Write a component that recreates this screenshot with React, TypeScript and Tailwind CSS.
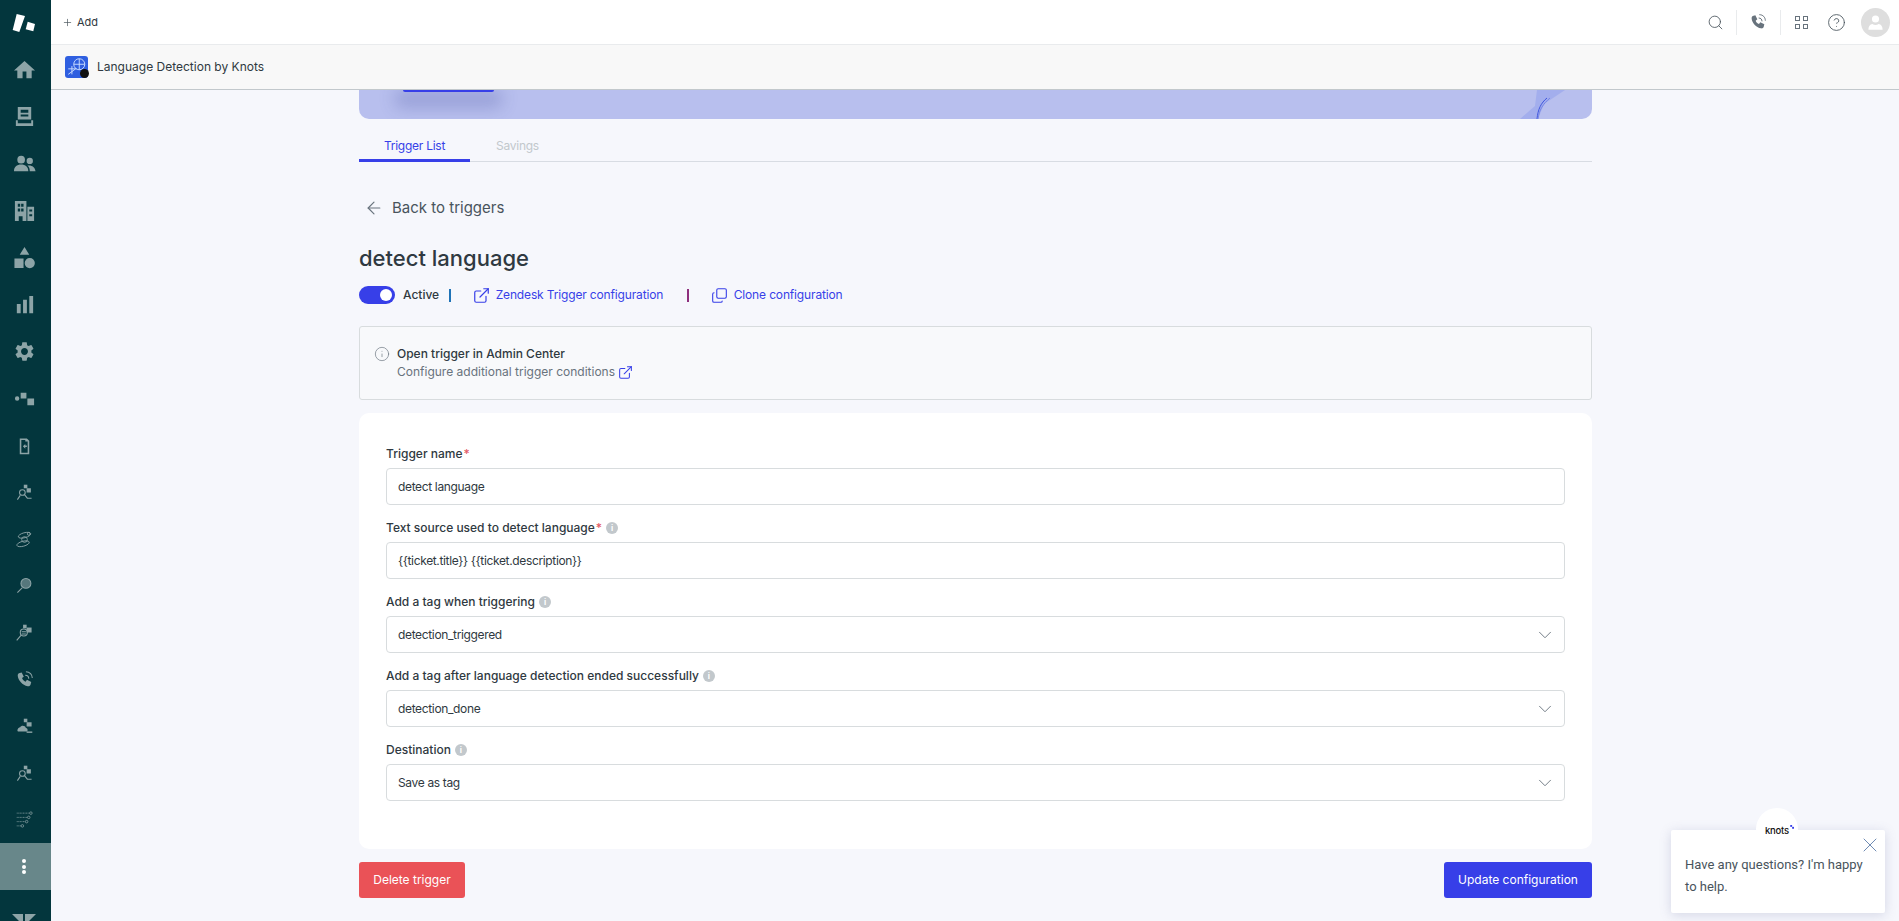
import React from 'react';
import { Search, Plus, ArrowLeft, ExternalLink, ChevronDown, X, Copy, CircleHelp, Info } from 'lucide-react';

const gear = 'M19.14 12.94c.04-.3.06-.61.06-.94 0-.32-.02-.64-.07-.94l2.03-1.58c.18-.14.23-.41.12-.61l-1.92-3.32c-.12-.22-.37-.29-.59-.22l-2.39.96c-.5-.38-1.03-.7-1.62-.94l-.36-2.54c-.04-.24-.24-.41-.48-.41h-3.84c-.24 0-.43.17-.47.41l-.36 2.54c-.59.24-1.13.57-1.62.94l-2.39-.96c-.22-.08-.47 0-.59.22L2.74 8.87c-.12.21-.08.47.12.61l2.03 1.58c-.05.3-.09.63-.09.94s.02.64.07.94l-2.03 1.58c-.18.14-.23.41-.12.61l1.92 3.32c.12.22.37.29.59.22l2.39-.96c.5.38 1.03.7 1.62.94l.36 2.54c.05.24.24.41.48.41h3.84c.24 0 .44-.17.47-.41l.36-2.54c.59-.24 1.13-.56 1.62-.94l2.39.96c.22.08.47 0 .59-.22l1.92-3.32c.12-.22.07-.47-.12-.61l-2.01-1.58zM12 15.6c-1.98 0-3.6-1.62-3.6-3.6s1.62-3.6 3.6-3.6 3.6 1.62 3.6 3.6-1.62 3.6-3.6 3.6z';

const railIcons: React.ReactNode[] = [
  <path key="h" d="M10 21v-7h4v7h5.500v-8H23L12 3 1 13h3.500v8z" />,
  <path key="t" fillRule="evenodd" d="M5 2h14v13H5zM8 5v3h8V5zM8 10v2h8v-2zM3 16h2v3h14v-3h2v6H3z" />,
  <path key="u" d="M8.500 4a4 4 0 1 1 0 8 4 4 0 0 1 0-8zM17.500 6a3.300 3.300 0 1 1 0 6.600 3.300 3.300 0 0 1 0-6.600zM1 20c0-4.500 3-7 7.500-7S16 15.500 16 20zM17.500 20c0-2.500-.8-4.500-2.500-5.800 4-1 8 1.300 8.500 5.800z" />,
  <path key="b" fillRule="evenodd" d="M2 2h12v21h-4v-5H6v5H2zM5 5v3h2.500V5zM8.500 5v3H11V5zM5 10v3h2.500v-3zM8.500 10v3H11v-3zM15 8h7v15h-7zM17 11v2h3v-2zM17 16v2h3v-2z" />,
  <path key="s" d="M12 1l5 8H7zM1.500 13h9.500v10H1.500zM17.500 12.500a5.300 5.300 0 1 1 0 10.600 5.300 5.300 0 0 1 0-10.600z" />,
  <path key="c" d="M4 11.500h4V21H4zM10.500 7h4v14h-4zM17 3h4v18h-4z" />,
  <path key="g" d={gear} />,
  <path key="r" d="M8 6h6v6H8zM2 12a2.300 2.300 0 1 1 4.600 0 2.300 2.300 0 0 1-4.600 0zM15 12h7v7h-7z" />,
  <path key="d" fillRule="evenodd" d="M6 3h9l3 3v17H6zM8 5v16h8V7h-3V5zM10 13l3-3v2h2v2h-2v2z" />,
];

const callPath = 'M4 3l4-1 3 6-2.500 2c1 2.500 2.500 4 5 5l2-2.500 6 3-1 4c-.5 1.500-2 2.500-4 2C9 20 3 13 2.500 7 2.300 5 3 3.800 4 3z';

// the little person + magnifier glyphs from marketplace apps
const AppGlyph = ({ kind }: { kind: string }) => {
  if (kind === 'person') {
    return (
      <svg viewBox="0 0 24 24" className="w-[17px] h-[17px]" fill="none" stroke="currentColor" strokeWidth="1.5">
        <rect x="15" y="6" width="6" height="6" fill="currentColor" stroke="none" />
        <rect x="11" y="1" width="5" height="5" fill="currentColor" stroke="none" />
        <circle cx="9" cy="12" r="4" />
        <path d="M2 22l4-6M12 15l4 5h6" />
      </svg>
    );
  }
  if (kind === 'globe') {
    return (
      <svg viewBox="0 0 24 24" className="w-[17px] h-[17px]" fill="none" stroke="currentColor" strokeWidth="1.2">
        <ellipse cx="12" cy="6" rx="9" ry="3.500" transform="rotate(-15 12 6)" />
        <circle cx="12" cy="12" r="4" />
        <ellipse cx="10" cy="18" rx="9" ry="3.500" transform="rotate(-15 10 18)" />
        <circle cx="18" cy="4" r="2" />
      </svg>
    );
  }
  if (kind === 'lens') {
    return (
      <svg viewBox="0 0 24 24" className="w-[17px] h-[17px]" fill="currentColor" stroke="currentColor" strokeWidth="1.5">
        <circle cx="14" cy="9" r="7" fillOpacity=".6" />
        <path d="M9 15l-7 7" fill="none" />
      </svg>
    );
  }
  if (kind === 'lens2') {
    return (
      <svg viewBox="0 0 24 24" className="w-[17px] h-[17px]" fill="none" stroke="currentColor" strokeWidth="1.5">
        <rect x="15" y="5" width="7" height="7" fill="currentColor" stroke="none" />
        <rect x="10" y="1" width="5" height="5" fill="currentColor" stroke="none" />
        <circle cx="11" cy="12" r="5" />
        <path d="M7 16l-6 7M8 11h6M8 14h6" />
      </svg>
    );
  }
  if (kind === 'call') {
    return (
      <svg viewBox="0 0 24 24" className="w-[17px] h-[17px]" fill="none" stroke="currentColor">
        <path fill="currentColor" stroke="none" d={callPath} />
        <path strokeWidth="1.5" d="M13 6c3 0 5 2 5 5M14 1c5.500 0 9 4 9 9" />
      </svg>
    );
  }
  if (kind === 'cloud') {
    return (
      <svg viewBox="0 0 24 24" className="w-[17px] h-[17px]" fill="currentColor">
        <rect x="15" y="6" width="7" height="6" />
        <rect x="11" y="1" width="5" height="5" />
        <path d="M2 18c0-3 2-5 4-5 1-3 7-3 8 1 2 0 3 2 2 5H3c-1 0-1-1-1-1z" />
        <rect x="15" y="19" width="8" height="2" />
      </svg>
    );
  }
  return (
    <svg viewBox="0 0 24 24" className="w-[17px] h-[17px]" fill="none" stroke="currentColor" strokeWidth="1" strokeDasharray="1.5 .7">
      <path d="M1 3h18M1 9h15M1 15h12M1 21h6" />
      <circle cx="21" cy="3" r="1.8" strokeDasharray="none" />
      <circle cx="18" cy="9" r="1.8" strokeDasharray="none" />
      <circle cx="15" cy="15" r="1.8" strokeDasharray="none" />
      <circle cx="9" cy="21" r="1.8" strokeDasharray="none" />
    </svg>
  );
};

const Rail = () => (
  <aside className="w-[51px] shrink-0 h-full bg-[#03363d] flex flex-col items-stretch overflow-hidden text-[#8da4a7]">
    <div className="h-[46px] shrink-0 flex items-center justify-center pr-[3px]">
      <svg viewBox="12 13 24 20" className="w-[24px] h-[20px] text-white" fill="currentColor">
        <path d="M16.700 14L25 16l-5.700 16-6.600-2z" />
        <path d="M27.700 21.700L35 24l-1.700 7.300-7.600-2z" />
      </svg>
    </div>
    {railIcons.map((icon, i) => (
      <div key={i} className="h-[47px] shrink-0 flex items-center justify-center pr-[3px]">
        <svg viewBox="0 0 24 24" className={i === 8 ? 'w-[19px] h-[19px]' : 'w-[23px] h-[23px]'} fill="currentColor">{icon}</svg>
      </div>
    ))}
    {['person', 'globe', 'lens', 'lens2', 'call', 'cloud', 'person', 'flow'].map((kind, i) => (
      <div key={i} className="h-[46.8px] shrink-0 flex items-center justify-center pr-[3px]">
        <AppGlyph kind={kind} />
      </div>
    ))}
    <div className="h-[47px] shrink-0 bg-[#68878a] flex flex-col items-center justify-center gap-[1.5px] pr-[3px]">
      <span className="w-[4px] h-[4px] rounded-full bg-white" />
      <span className="w-[4px] h-[4px] rounded-full bg-white" />
      <span className="w-[4px] h-[4px] rounded-full bg-white" />
    </div>
    <div className="pt-[24px] flex justify-center pr-[3px]">
      <svg viewBox="0 0 24 12" className="w-[24px] h-[12px]" fill="currentColor">
        <path d="M0 0h11v11zM13 11V0h11z" />
      </svg>
    </div>
  </aside>
);

const TopBar = () => (
  <header className="h-[45px] shrink-0 bg-white border-b border-[#e9ebed] flex items-center justify-between pl-[11px] pr-[9px]">
    <div className="flex items-center gap-[4px] text-[#2f3941]">
      <Plus size={11} strokeWidth={1.5} className="text-[#49545c]" />
      <span className="text-[11px]">Add</span>
    </div>
    <div className="flex items-center text-[#49545c]">
      <Search size={17} strokeWidth={1.2} />
      <span className="w-px h-[25px] bg-[#e9ebed] ml-[12px] mr-[13px]" />
      <svg viewBox="0 0 24 24" className="w-[16px] h-[16px] text-[#68737d]" fill="none" stroke="currentColor">
        <path fill="currentColor" stroke="none" d={callPath} />
        <path strokeWidth="1.5" d="M13 6c3 0 5 2 5 5M14 1c5.500 0 9 4 9 9" />
      </svg>
      <span className="w-px h-[25px] bg-[#e9ebed] ml-[14px] mr-[14px]" />
      <div className="grid grid-cols-2 gap-[3px]">
        <span className="w-[5px] h-[5px] border border-[#68737d]" />
        <span className="w-[5px] h-[5px] border border-[#68737d]" />
        <span className="w-[5px] h-[5px] border border-[#68737d]" />
        <span className="w-[5px] h-[5px] border border-[#68737d]" />
      </div>
      <CircleHelp size={19} strokeWidth={1.1} className="ml-[19px] mr-[15px]" />
      <div className="w-[29px] h-[29px] rounded-full bg-[#dedede] flex items-center justify-center">
        <svg viewBox="0 0 24 24" className="w-[19px] h-[19px] text-white" fill="currentColor">
          <circle cx="12" cy="7.5" r="4.5" />
          <path d="M3 21c0-4 2-6.500 5-7 2.500 1.500 5.500 1.500 8 0 3 .5 5 3 5 7z" />
        </svg>
      </div>
    </div>
  </header>
);

const SubBar = () => (
  <div className="h-[45px] shrink-0 bg-[#f8f8f8] border-b border-[#c2c8cc] flex items-center pl-[14px] gap-[9px]">
    <div className="relative w-[23px] h-[22px] rounded-[3px] bg-[#2f5fe0]">
      <svg viewBox="0 0 24 24" className="w-full h-full text-[#cfe0ff]" fill="none" stroke="currentColor" strokeWidth="1">
        <circle cx="15" cy="9" r="6" />
        <path d="M9 9h12M15 3v12M3 14h9M7 11v9M3 20l8-6" />
      </svg>
      <span className="absolute -right-[1px] bottom-0 w-[9px] h-[9px] rounded-full bg-[#111]" />
    </div>
    <span className="text-[12px] leading-none text-[#2f3941]">Language Detection by Knots</span>
  </div>
);

const Banner = () => (
  <div className="relative h-[29px] rounded-b-[10px] bg-[#b8bfee] pl-[44px] overflow-hidden">
    <div className="w-[91px] h-[2px] rounded-b-[2px] bg-[#373fe8] shadow-[0_8px_16px_8px_rgba(60,70,150,0.25)]" />
    <svg viewBox="0 0 45 29" className="absolute right-[27px] top-0 w-[45px] h-[29px]" fill="none">
      <path d="M17 0h28L24 14l-6 15H0l15-13z" fill="#9aa6ec" fillOpacity=".7" />
      <path d="M17 29C18 19 21 13 27 8" stroke="#3f55dd" strokeWidth="1" />
      <path d="M18 29C19 20 23 14 30 8" stroke="#7585e6" strokeWidth="1" />
    </svg>
  </div>
);

const Tabs = () => (
  <div className="flex border-b border-[#d8dce3] mt-[12px] text-[12px] tracking-[-0.25px] h-[31px]">
    <div className="w-[111px] h-[31px] text-center pt-[6px] text-[#373fe8] border-b-[3px] border-[#373fe8]">Trigger List</div>
    <div className="pl-[26px] pt-[6px] text-[#c2c8cc]">Savings</div>
  </div>
);

const Hint = () => (
  <span className="inline-flex items-center justify-center w-[12px] h-[12px] rounded-full bg-[#c2c8cc] text-white text-[8px] font-bold leading-none">i</span>
);

const Field = ({ label, required, hint, value, select }: { label: string; required?: boolean; hint?: boolean; value: string; select?: boolean }) => (
  <div className="flex flex-col">
    <div className="h-[21px] flex items-center text-[12px] font-medium text-[#2f3941] leading-none">
      {label}
      {required && <span className="text-[#e35b66] ml-[1px]">*</span>}
      {hint && <span className="ml-[4px] flex"><Hint /></span>}
    </div>
    <div className="mt-[4px] h-[37px] bg-white border border-[#d8dcde] rounded-[4px] flex items-center justify-between pl-[11px] pr-[8px] text-[12px] tracking-[-0.35px] text-[#2f3941]">
      <span>{value}</span>
      {select && <ChevronDown size={22} strokeWidth={1} className="text-[#68737d]" />}
    </div>
  </div>
);

const ChatBubble = () => (
  <div className="absolute left-[1671px] top-[830px] w-[214px] h-[83px] bg-white rounded-[2px] shadow-[0_2px_12px_rgba(90,100,150,0.22)] pl-[14px] pt-[24px] font-['Roboto',sans-serif] text-[13px] leading-[22px] text-[#49545c]">
    <div className="absolute left-[85px] -top-[22px] w-[42px] h-[42px] rounded-full bg-white" />
    <div className="absolute left-[94px] -top-[4px] flex items-start">
      <span className="text-[9.5px] font-medium text-[#111] font-['Inter',sans-serif] tracking-tight leading-[10px]">knots</span>
      <svg viewBox="0 0 8 8" className="w-[5px] h-[5px] -mt-[1px]" fill="#373fe8">
        <rect x="2" y="0" width="3" height="3" />
        <rect x="5" y="3" width="3" height="3" />
      </svg>
    </div>
    <X size={24} strokeWidth={1} className="absolute right-[3px] top-[3px] text-[#6f8bb3]" />
    <p className="relative w-[190px]">Have any questions? I'm happy to help.</p>
  </div>
);

export default function App() {
  return (
    <div className="relative w-full h-screen overflow-hidden flex bg-[#f6f7fc] font-['Inter',sans-serif]">
      <Rail />
      <div className="flex-1 min-w-0 flex flex-col">
        <TopBar />
        <SubBar />
        <main className="w-[1233px] ml-[308px]">
          <Banner />
          <Tabs />
          <div className="flex items-center gap-[8px] mt-[31px] h-[30px] pl-[5px] text-[#49545c]">
            <ArrowLeft size={20} strokeWidth={1.4} className="text-[#68737d]" />
            <span className="text-[15px]">Back to triggers</span>
          </div>
          <h1 className="mt-[19px] h-[33px] text-[22px] font-medium leading-[33px] text-[#2f3941]">detect language</h1>
          <div className="flex items-center mt-[11px] h-[18px] text-[12px]">
            <span className="relative w-[36px] h-[18px] rounded-full bg-[#373fe8]">
              <span className="absolute right-[3px] top-[3px] w-[12px] h-[12px] rounded-full bg-white" />
            </span>
            <span className="ml-[8px] font-medium text-[#2f3941]">Active</span>
            <span className="ml-[10px] w-[1.5px] h-[13px] bg-[#1f73b7]" />
            <ExternalLink size={15} strokeWidth={1.6} viewBox="2 2 20 20" className="ml-[23px] text-[#373fe8]" />
            <span className="ml-[7px] text-[#373fe8] tracking-[-0.15px]">Zendesk Trigger configuration</span>
            <span className="ml-[24px] w-[1.5px] h-[13px] bg-[#8e2f7d]" />
            <Copy size={15} strokeWidth={1.6} viewBox="1 1 22 22" className="ml-[23px] text-[#373fe8] -scale-y-100" />
            <span className="ml-[7px] text-[#373fe8] tracking-[-0.15px]">Clone configuration</span>
          </div>
          <div className="mt-[22px] h-[74px] border border-[#d8dcde] rounded-[3px] bg-[#f8f9fb] flex items-start pt-[18px] pl-[14px]">
            <Info size={16} strokeWidth={1} className="mt-[1px] text-[#68737d]" />
            <div className="ml-[7px] text-[12px] leading-[18px]">
              <div className="font-medium text-[#2f3941]">Open trigger in Admin Center</div>
              <div className="flex items-center gap-[4px] text-[#68737d]">
                Configure additional trigger conditions
                <ExternalLink size={13} strokeWidth={1.6} viewBox="2 2 20 20" className="text-[#373fe8]" />
              </div>
            </div>
          </div>
          <section className="mt-[13px] h-[436px] bg-white rounded-[10px] px-[27px] pt-[30px] flex flex-col gap-[12px]">
            <Field label="Trigger name" required value="detect language" />
            <Field label="Text source used to detect language" required hint value="{{ticket.title}} {{ticket.description}}" />
            <Field label="Add a tag when triggering" hint value="detection_triggered" select />
            <Field label="Add a tag after language detection ended successfully" hint value="detection_done" select />
            <Field label="Destination" hint value="Save as tag" select />
          </section>
          <div className="mt-[13px] flex justify-between">
            <button className="w-[106px] h-[36px] rounded-[3px] bg-[#ea5257] text-white text-[12px]">Delete trigger</button>
            <button className="w-[148px] h-[36px] rounded-[3px] bg-[#373fe8] text-white text-[12px]">Update configuration</button>
          </div>
        </main>
      </div>
      <ChatBubble />
    </div>
  );
}
